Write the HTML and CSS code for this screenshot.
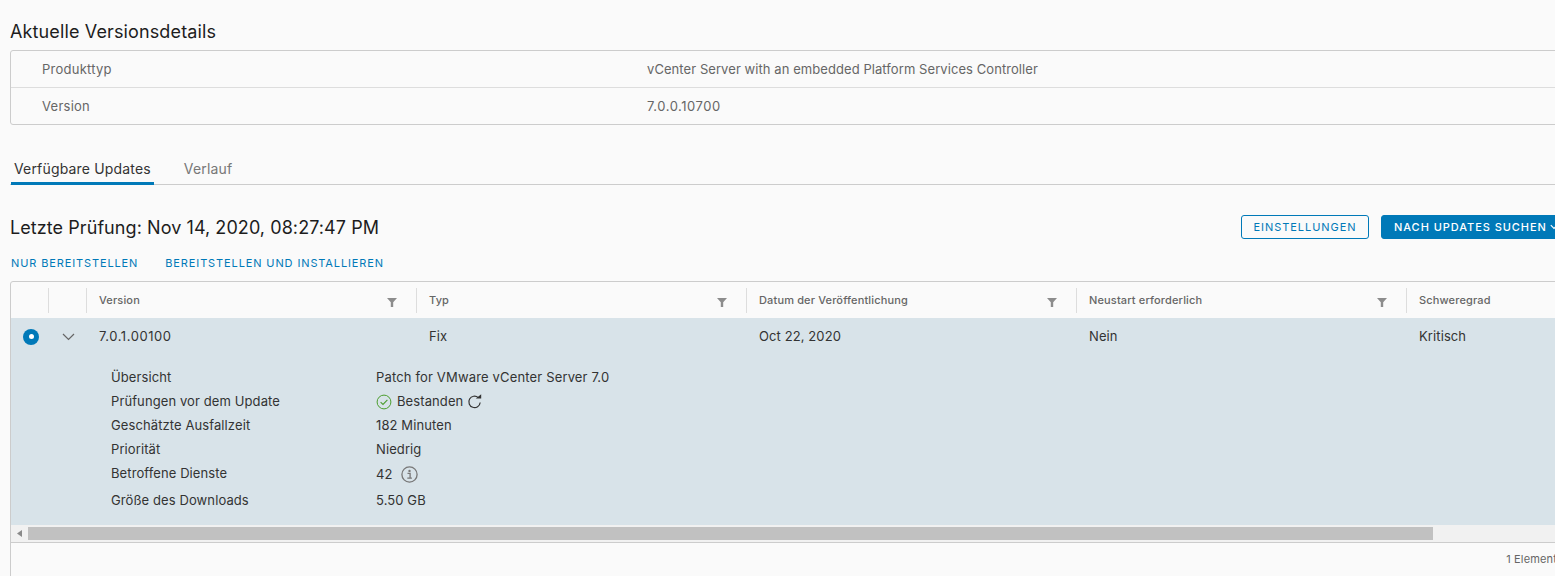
FILE: index.html
```html
<!DOCTYPE html>
<html lang="de">
<head>
<meta charset="utf-8">
<title>Aktuelle Versionsdetails</title>
<link rel="stylesheet" href="styles.css">
</head>
<body>
<main class="page">
  <h2 class="title">Aktuelle Versionsdetails</h2>
  <section class="summary">
    <div class="summary-row"><span class="summary-key">Produkttyp</span><span class="summary-val">vCenter Server with an embedded Platform Services Controller</span></div>
    <div class="summary-row"><span class="summary-key">Version</span><span class="summary-val num">7.0.0.10700</span></div>
  </section>
  <nav class="tabs">
    <span class="tab tab-active">Verfügbare Updates</span>
    <span class="tab">Verlauf</span>
  </nav>
  <div class="check-bar">
    <h3 class="check-title">Letzte Prüfung: Nov 14, 2020, 08:27:47 PM</h3>
    <div class="buttons">
      <button class="btn btn-outline">EINSTELLUNGEN</button>
      <button class="btn btn-primary">NACH UPDATES SUCHEN<svg class="btn-caret" width="8" height="6" viewBox="0 0 8 6"><path d="M.8 1.2 4 4.4l3.2-3.2" fill="none" stroke="#fff" stroke-width="1.1"/></svg></button>
    </div>
  </div>
  <div class="actions">
    <a class="action">NUR BEREITSTELLEN</a>
    <a class="action">BEREITSTELLEN UND INSTALLIEREN</a>
  </div>
  <section class="grid">
    <div class="grid-head">
      <div class="hcell"></div>
      <div class="hcell"></div>
      <div class="hcell">Version<svg class="filter" width="10" height="9" viewBox="0 0 10 9"><path d="M0 0h10L6.2 4.2V9H3.8V4.2z" fill="#8c8c8c"/></svg></div>
      <div class="hcell">Typ<svg class="filter" width="10" height="9" viewBox="0 0 10 9"><path d="M0 0h10L6.2 4.2V9H3.8V4.2z" fill="#8c8c8c"/></svg></div>
      <div class="hcell">Datum der Veröffentlichung<svg class="filter" width="10" height="9" viewBox="0 0 10 9"><path d="M0 0h10L6.2 4.2V9H3.8V4.2z" fill="#8c8c8c"/></svg></div>
      <div class="hcell">Neustart erforderlich<svg class="filter" width="10" height="9" viewBox="0 0 10 9"><path d="M0 0h10L6.2 4.2V9H3.8V4.2z" fill="#8c8c8c"/></svg></div>
      <div class="hcell">Schweregrad</div>
    </div>
    <div class="grid-selected">
      <div class="grid-row">
        <div class="cell cell-icon"><span class="radio"></span></div>
        <div class="cell cell-icon"><svg width="13" height="8" viewBox="0 0 13 8"><path d="M1 1l5.5 5.5L12 1" fill="none" stroke="#666" stroke-width="1.2"/></svg></div>
        <div class="cell num">7.0.1.00100</div>
        <div class="cell">Fix</div>
        <div class="cell">Oct 22, 2020</div>
        <div class="cell">Nein</div>
        <div class="cell">Kritisch</div>
      </div>
      <dl class="detail">
        <dt>Übersicht</dt><dd class="patch">Patch for VMware vCenter Server 7.0</dd>
        <dt>Prüfungen vor dem Update</dt>
        <dd class="with-icons">
          <svg class="ok" width="16" height="16" viewBox="0 0 16 16"><circle cx="8" cy="8" r="6.9" fill="none" stroke="#4c9e2f" stroke-width="1"/><path d="M4.6 8.1l2.4 2.4 4.4-4.7" fill="none" stroke="#4c9e2f" stroke-width="1.1"/></svg>
          <span>Bestanden</span>
          <svg class="refresh" width="15" height="15" viewBox="0 0 15 15"><path d="M11.3 3.6A5.7 5.7 0 1 0 13.2 8.5" fill="none" stroke="#333" stroke-width="1.2"/><path d="M8.8 4.4h5.4V.2z" fill="#333"/></svg>
        </dd>
        <dt>Geschätzte Ausfallzeit</dt><dd>182 Minuten</dd>
        <dt>Priorität</dt><dd>Niedrig</dd>
        <dt>Betroffene Dienste</dt>
        <dd class="with-icons info-row">
          <span>42</span>
          <svg class="info" width="17" height="17" viewBox="0 0 17 17"><circle cx="8.5" cy="8.5" r="7.6" fill="none" stroke="#777" stroke-width="1.3"/><circle cx="8.5" cy="4.9" r="1.2" fill="#777"/><path d="M6.5 7.4h2.6v4.6M6.3 12.2h4.6" fill="none" stroke="#777" stroke-width="1.3"/></svg>
        </dd>
        <dt>Größe des Downloads</dt><dd>5.50 GB</dd>
      </dl>
    </div>
    <div class="scrollbar">
      <svg class="scroll-arrow" width="5" height="7" viewBox="0 0 5 7"><path d="M5 0v7L0 3.5z" fill="#8a8a8a"/></svg>
      <div class="scroll-thumb"></div>
    </div>
    <div class="grid-foot">1 Element</div>
  </section>
</main>
</body>
</html>
```
FILE: styles.css
```css
* { box-sizing: border-box; }
html, body { margin: 0; height: 576px; overflow: hidden; background: #fafafa; }
body { font-family: Inter, "Noto Sans", sans-serif; color: #333; font-size: 13px; letter-spacing: .1px; }
.page { width: 1600px; padding: 21px 0 0 10px; }
.title { margin: 0; height: 29px; font-size: 18px; line-height: 21px; font-weight: 400; letter-spacing: .13px; color: #1d1d1d; }
.summary { border: 1px solid #ccc; border-radius: 3px; height: 75px; }
.summary-row { display: flex; height: 36px; align-items: center; padding: 0 0 1px 31px; }
.summary-row + .summary-row { height: 37px; border-top: 1px solid #ddd; }
.summary-key { width: 605px; color: #666; letter-spacing: .25px; }
.summary-val { color: #666; letter-spacing: .07px; }
.summary-val.num, .num { letter-spacing: .55px; }
.tabs { display: flex; margin-top: 29px; height: 31px; border-bottom: 1px solid #ccc; }
.tab { padding: 0 3px; margin-left: 1px; line-height: 30px; font-size: 14px; letter-spacing: .17px; color: #777; }
.tab + .tab { margin-left: 27px; }
.tab-active { color: #333; height: 31px; border-bottom: 3px solid #0079b8; }
.check-bar { display: flex; justify-content: space-between; align-items: center; margin-top: 30px; height: 24px; }
.check-title { margin: 0; font-size: 18px; font-weight: 400; letter-spacing: .07px; color: #1d1d1d; }
.buttons { display: flex; gap: 12px; }
.btn { height: 24px; border-radius: 3px; font: 500 11px Inter, sans-serif; letter-spacing: .95px; padding: 0; }
.btn-outline { width: 128px; background: #fafafa; border: 1px solid #0079b8; color: #0079b8; font-weight: 400; letter-spacing: .95px; }
.btn-primary { width: 219px; background: #0079b8; border: 1px solid #0079b8; color: #fff; text-align: left; padding-left: 12px; }
.btn-caret { margin-left: 3px; vertical-align: 1px; }
.actions { display: flex; gap: 27px; margin-top: 17px; padding-left: 1px; height: 14px; line-height: 14px; }
.action { color: #0079b8; font-size: 11px; letter-spacing: .88px; font-weight: 400; }
.grid { margin-top: 11px; border: 1px solid #ccc; border-radius: 3px; }
.grid-head, .grid-row { display: grid; grid-template-columns: 38px 38px 330px 330px 330px 330px 1fr; }
.grid-head { height: 36px; padding-top: 6px; }
.hcell { position: relative; height: 25px; border-right: 1px solid #ddd; padding-left: 12px; line-height: 24px; font-size: 11px; font-weight: 500; letter-spacing: .15px; color: #666; }
.hcell:last-child { border-right: 0; }
.filter { position: absolute; right: 19px; top: 10px; }
.grid-selected { background: #d8e3e9; height: 207px; }
.grid-row { height: 37px; }
.cell { padding-left: 12px; line-height: 36px; color: #333; }
.cell-icon { display: flex; align-items: center; justify-content: center; padding: 0; }
.radio { width: 16px; height: 16px; border-radius: 50%; background: #0079b8; display: flex; align-items: center; justify-content: center; margin-left: 2px; }
.radio::after { content: ""; width: 5px; height: 5px; border-radius: 50%; background: #fff; }
.detail { display: grid; grid-template-columns: 265px 1fr; grid-template-rows: 24px 24px 24px 24px 27px 24px; margin: 10px 0 0; padding-left: 100px; line-height: 24px; }
.detail dt, .detail dd { margin: 0; }
.detail dd { color: #333; }
.detail .patch { letter-spacing: .16px; }
.with-icons { display: flex; align-items: center; height: 24px; }
.info-row { height: 26px; }
.ok { margin-right: 5px; margin-top: 1px; }
.refresh { margin-left: 4px; margin-top: 1px; }
.info { margin-left: 8px; }
.scrollbar { position: relative; height: 17px; background: #f1f1f1; padding: 2px 0 2px 17px; }
.scroll-arrow { position: absolute; left: 6px; top: 5px; }
.scroll-thumb { width: 1405px; height: 13px; background: #c1c1c1; }
.grid-foot { border-top: 1px solid #ccc; height: 40px; padding-right: 42px; text-align: right; line-height: 32px; font-size: 11px; letter-spacing: .15px; color: #666; }
```
